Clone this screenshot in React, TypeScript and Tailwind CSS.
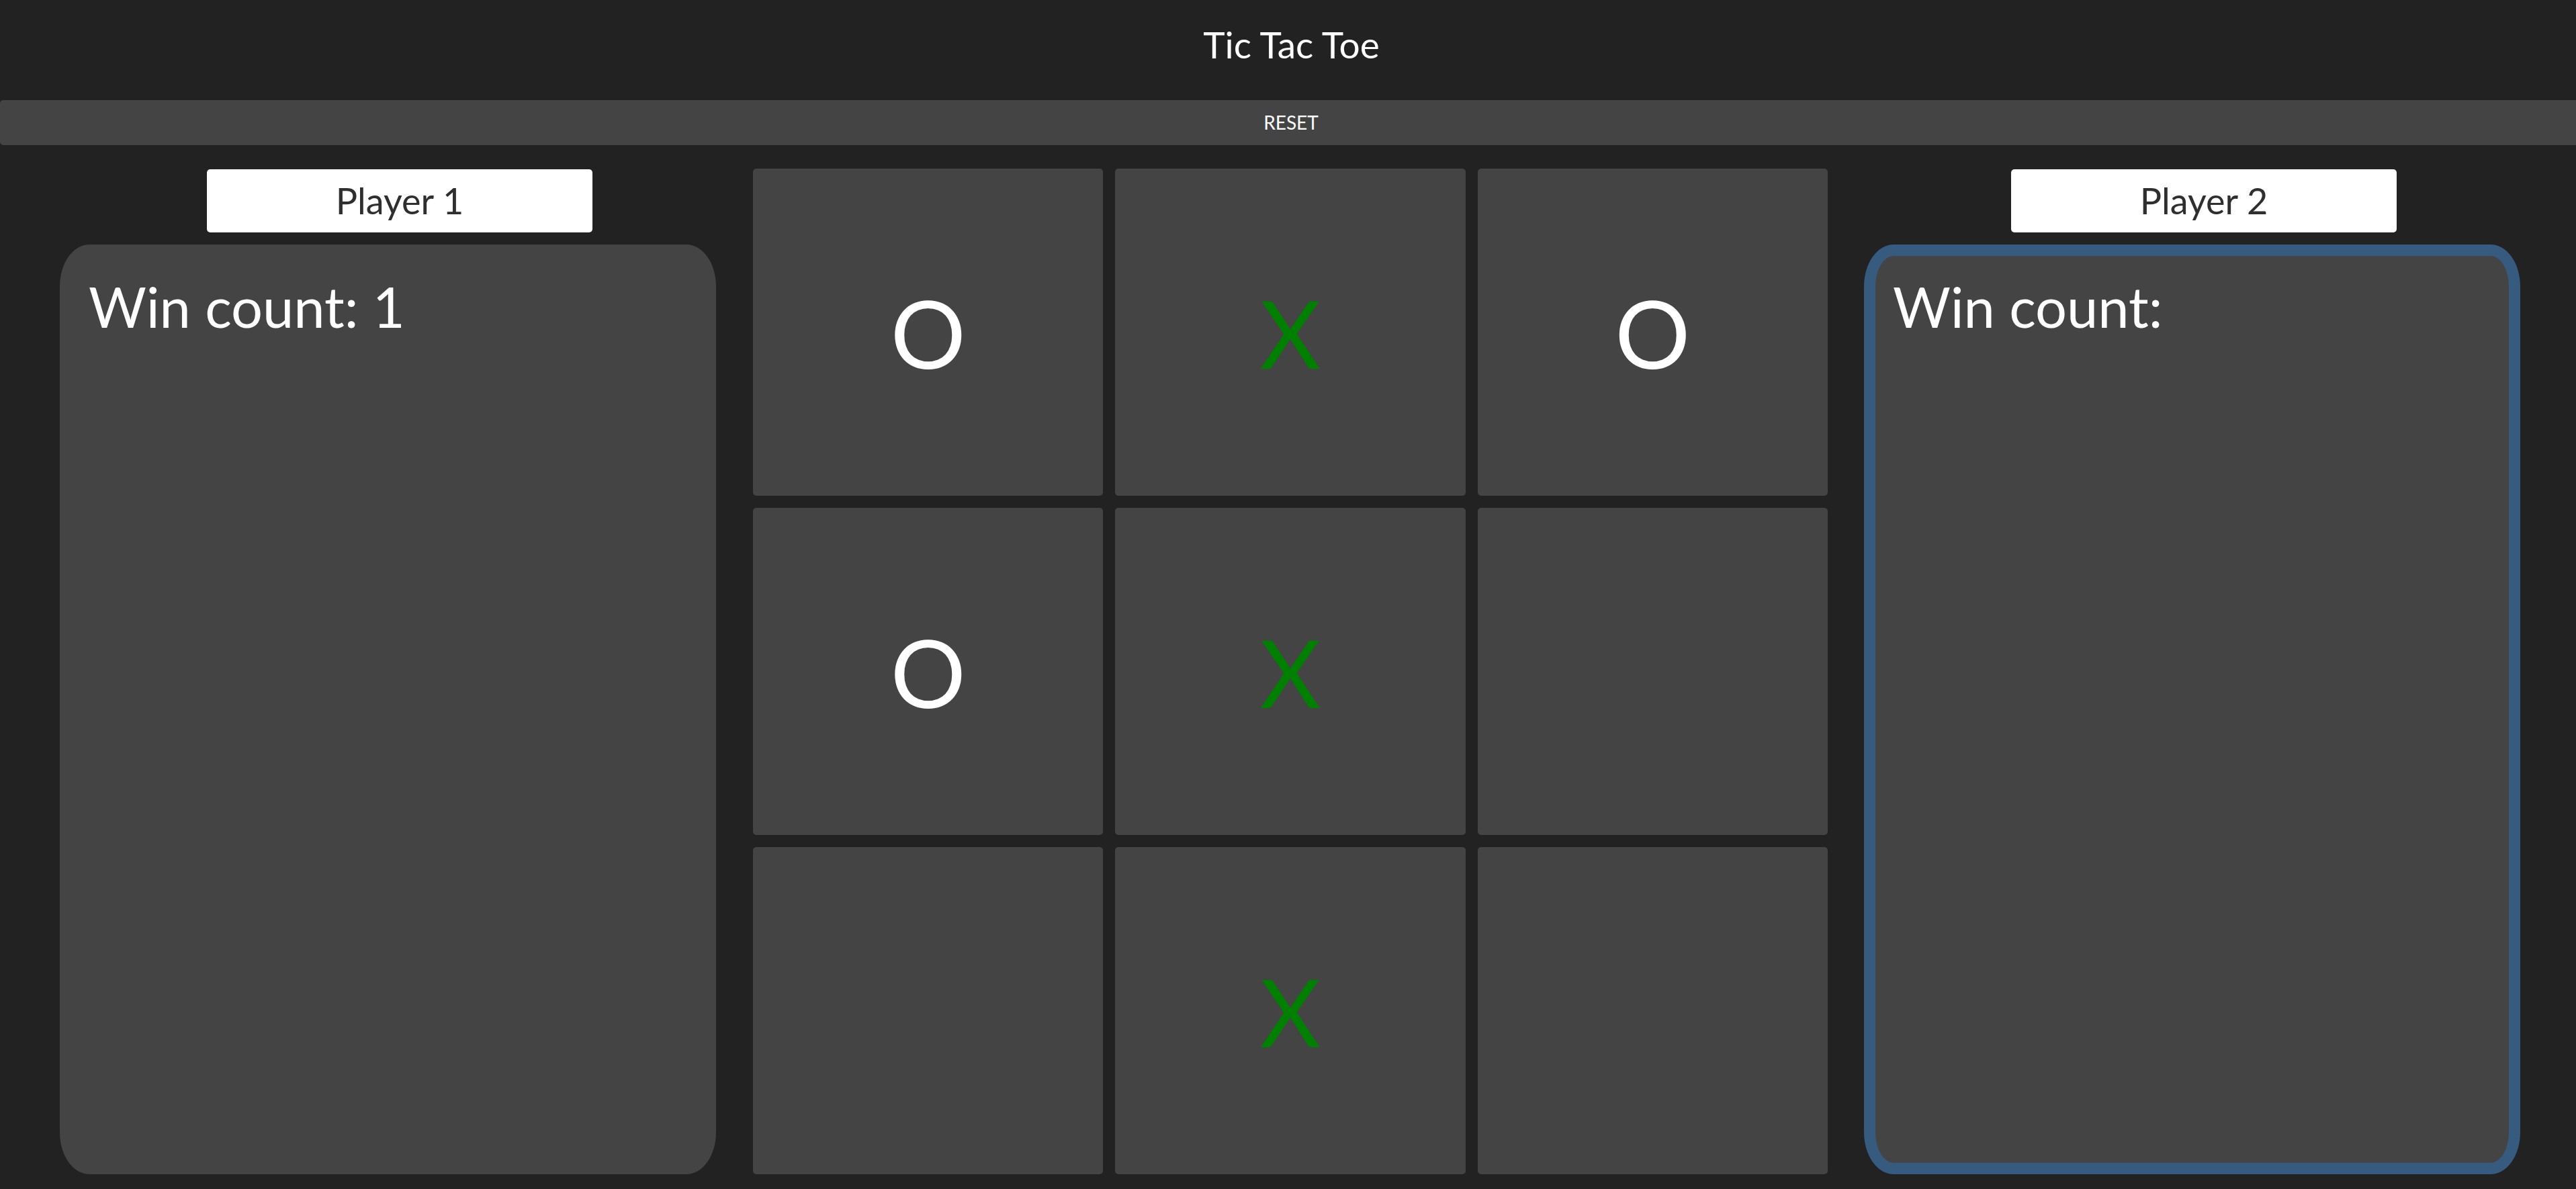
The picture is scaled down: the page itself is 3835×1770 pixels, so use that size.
import React from 'react';

type Mark = 'X' | 'O' | null;

const board: Mark[] = ['O', 'X', 'O', 'O', 'X', null, null, 'X', null];

function PlayerColumn({ name, wins, active }: { name: string; wins?: number; active?: boolean }) {
  return (
    <div className="flex flex-col w-[977px] shrink-0">
      <div className="ml-[219px] mt-[1px] w-[574px] h-[94px] bg-white rounded-[5px] flex items-center justify-center text-[54px] leading-[1.2] text-[#2f2f2f]">
        {name}
      </div>
      <div
        className={
          active
            ? 'mt-[18px] flex-1 rounded-[4.5%] border-[17px] border-[#375a7f] bg-[#444444] p-[26px]'
            : 'mt-[18px] flex-1 rounded-[4.5%] border-[17px] border-[#444444] bg-[#444444] p-[26px]'
        }
      >
        <p className="text-[83px] leading-[1.2] text-white">Win count:{wins !== undefined ? ` ${wins}` : ''}</p>
      </div>
    </div>
  );
}

export default function App() {
  return (
    <div className="min-h-[1770px] w-full bg-[#222222] font-['Lato',sans-serif]">
      <header className="h-[149px] pt-[33px] pl-[10px] text-center">
        <h1 className="text-[55px] leading-[1.2] text-white">Tic Tac Toe</h1>
      </header>

      <button className="w-full h-[67px] pl-[9px] bg-[#444444] rounded-l-[5px] text-[28px] leading-[1.2] text-white">
        RESET
      </button>

      <main className="flex pt-[35px] pb-[22px] h-[1554px]">
        <div className="ml-[89px] flex">
          <PlayerColumn name="Player 1" wins={1} />
        </div>

        <div className="ml-[55px] w-[1600px] shrink-0 grid grid-cols-3 grid-rows-3 gap-[18px]">
          {board.map((cell, i) => (
            <div
              key={i}
              className="bg-[#444444] rounded-[5px] flex items-center justify-center text-[140px] leading-[1.2]"
            >
              {cell === 'X' && <span className="text-[#008000]">X</span>}
              {cell === 'O' && <span className="text-white">O</span>}
            </div>
          ))}
        </div>

        <div className="ml-[54px] flex">
          <PlayerColumn name="Player 2" active />
        </div>
      </main>
    </div>
  );
}
